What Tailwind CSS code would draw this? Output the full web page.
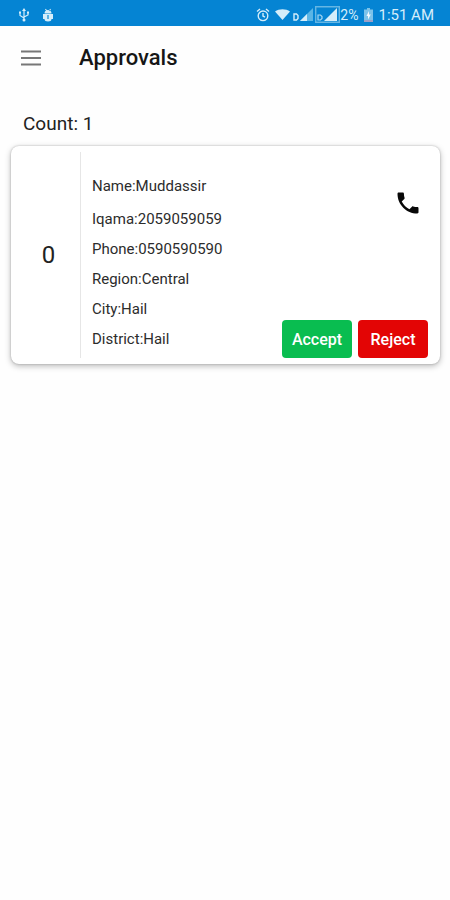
<!DOCTYPE html>
<html lang="en">
<head>
    <meta charset="UTF-8">
    <meta name="viewport" content="width=device-width, initial-scale=1.0">
    <title>Approvals</title>
    <script src="https://cdn.jsdelivr.net/npm/@tailwindcss/browser@4"></script>
</head>
<body class="bg-[#fefefe] min-h-screen font-['Roboto',sans-serif] text-[#222222]">
    <!-- Status Bar -->
    <div class="flex h-[26px] items-center justify-between bg-[#0584d3] pl-[18px] pr-4 pt-[3px] text-[#d5edfa]">
        <div class="flex items-center gap-3">
            <svg class="h-[14px] w-3" viewBox="0 0 12 14" fill="none" stroke="currentColor" stroke-width="1.2">
                <path d="M6 2v10M2 5v2.5L6 10M10 5v2L6 9"/>
                <path d="M6 0L4 3h4zM1 3.5h2v2H1zM9 3.5h2v2H9z" fill="currentColor" stroke="none"/>
                <circle cx="6" cy="12" r="1.5" fill="currentColor" stroke="none"/>
            </svg>
            <svg class="h-[14px] w-3" viewBox="0 0 12 14" fill="currentColor">
                <path d="M2.500 5.500a3.500 3.500 0 0 1 7 0zM3 1.500l.8-.7 1.400 1.700-.8.7zM9 1.500L8.200.8 6.800 2.500l.8.7z"/>
                <path d="M1 6h10v5H9.500a3.500 2.500 0 0 1-7 0H1z"/>
                <path d="M5 7h2v4H5z" fill="#5bb1e3"/>
            </svg>
        </div>
        <div class="flex items-center">
            <svg class="mr-[5px] h-[14px] w-[14px]" viewBox="0 0 14 14" fill="none" stroke="currentColor" stroke-width="1.4">
                <circle cx="7" cy="7.8" r="4.8"/>
                <path d="M7 5v3l2 1.2M1 3.5L4 1M13 3.5L10 1"/>
            </svg>
            <svg class="mr-[3px] h-[11px] w-[15px]" viewBox="0 0 15 11" fill="currentColor">
                <path d="M0 2.5C4-.6 11-.6 15 2.500L7.500 11z"/>
            </svg>
            <svg class="mr-[2px] h-[13px] w-5" viewBox="0 0 20 13">
                <path d="M1 6h2.500l1.500 1.500v3L3.500 12H1z" fill="none" stroke="currentColor" stroke-width="1.4"/>
                <path d="M20 0v13H7z" fill="#5bb5e5"/>
                <path d="M14 6v7H7z" fill="currentColor"/>
            </svg>
            <svg class="h-[17px] w-[25px]" viewBox="0 0 25 17">
                <path d="M.7.7h23.600v15.600H.7z" fill="none" stroke="#65b6e4" stroke-width="1.4"/>
                <path d="M3 9h2.500L7 10.500v2L5.500 14H3z" fill="none" stroke="#a6d7f2" stroke-width="1.2"/>
                <path d="M22 2v13H9z" fill="currentColor"/>
            </svg>
            <span class="text-sm leading-4">2%</span>
            <svg class="ml-[6px] mr-[5px] h-[14px] w-[9px]" viewBox="0 0 9 14">
                <path d="M3 0h3v1.500h3V14H0V1.500h3z" fill="#7cc3ea"/>
                <path d="M0 12h9v2H0z" fill="#9b9fc8"/>
                <path d="M5 3L2.500 8H4v3.500L6.800 6.500H5z" fill="#f2faff"/>
            </svg>
            <span class="text-[15px] leading-4">1:51 AM</span>
        </div>
    </div>

    <!-- App Bar -->
    <header class="flex h-16 items-center gap-[38px] px-5">
        <button type="button" aria-label="Open menu" class="w-[21px]">
            <svg class="h-[16px] w-full" viewBox="0 0 21 16" stroke="#777777" stroke-width="2">
                <path d="M1 1.500h20M1 8h20M1 14.500h20"/>
            </svg>
        </button>
        <h1 class="text-[22px] font-medium leading-7 text-[#161616]">Approvals</h1>
    </header>

    <main class="pl-[11px] pr-[10px] pt-5">
        <p class="px-3 text-[19px] leading-7">Count: 1</p>

        <!-- Approval Card -->
        <div class="mt-2 flex rounded-lg bg-white py-[6px] shadow-[0_2px_6px_rgba(0,0,0,0.28),0_0_2px_rgba(0,0,0,0.25)]">
            <div class="flex w-[70px] items-center justify-center border-r border-[#e6e6e6] pl-[6px] text-2xl">0</div>
            <div class="flex-1 pl-[11px] pt-[19px] pb-1 text-[15px] leading-[30px] text-[#2c2c2c]">
                <p class="mb-[3px]">Name:Muddassir</p>
                <p>Iqama:2059059059</p>
                <p>Phone:0590590590</p>
                <p>Region:Central</p>
                <p>City:Hail</p>
                <p>District:Hail</p>
            </div>
            <div class="flex flex-col items-end justify-between pr-3 pt-[37px]">
                <button type="button" aria-label="Call" class="mr-[6px]">
                    <svg class="h-7 w-7" viewBox="0 0 24 24" fill="#080808">
                        <path d="M6.620 10.790c1.440 2.830 3.760 5.140 6.590 6.590l2.200-2.200c.27-.27.67-.36 1.020-.24 1.120.37 2.330.57 3.570.57.55 0 1 .45 1 1V20c0 .55-.45 1-1 1-9.390 0-17-7.610-17-17 0-.55.45-1 1-1h3.500c.55 0 1 .45 1 1 0 1.250.2 2.450.57 3.570.11.35.03.74-.25 1.020l-2.200 2.200z"/>
                    </svg>
                </button>
                <div class="flex gap-[6px]">
                    <button type="button" class="h-[38px] w-[70px] rounded bg-[#09bd50] pt-[2px] text-base font-medium text-white">Accept</button>
                    <button type="button" class="h-[38px] w-[70px] rounded bg-[#e30505] pt-[2px] text-base font-medium text-white">Reject</button>
                </div>
            </div>
        </div>
    </main>
</body>
</html>
